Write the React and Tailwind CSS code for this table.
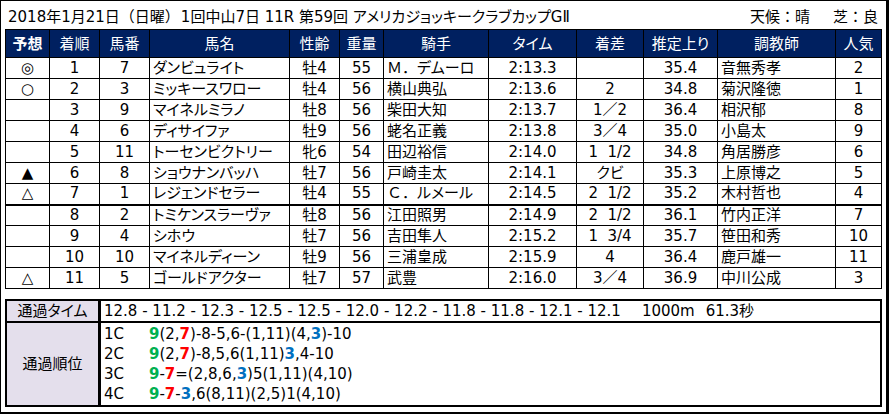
const rows = [
  ['◎', 1, 7, 'ダンビュライト', '牡4', 55, 'Ｍ．デムーロ', '2:13.3', '', '35.4', '音無秀孝', 2],
  ['○', 2, 3, 'ミッキースワロー', '牡4', 56, '横山典弘', '2:13.6', '2', '34.8', '菊沢隆徳', 1],
  ['', 3, 9, 'マイネルミラノ', '牡8', 56, '柴田大知', '2:13.7', '1／2', '36.4', '相沢郁', 8],
  ['', 4, 6, 'ディサイファ', '牡9', 56, '蛯名正義', '2:13.8', '3／4', '35.0', '小島太', 9],
  ['', 5, 11, 'トーセンビクトリー', '牝6', 54, '田辺裕信', '2:14.0', '1  1/2', '34.8', '角居勝彦', 6],
  ['▲', 6, 8, 'ショウナンバッハ', '牡7', 56, '戸崎圭太', '2:14.1', 'クビ', '35.3', '上原博之', 5],
  ['△', 7, 1, 'レジェンドセラー', '牡4', 55, 'Ｃ．ルメール', '2:14.5', '2  1/2', '35.2', '木村哲也', 4],
  ['', 8, 2, 'トミケンスラーヴァ', '牡8', 56, '江田照男', '2:14.9', '2  1/2', '36.1', '竹内正洋', 7],
  ['', 9, 4, 'シホウ', '牡7', 56, '吉田隼人', '2:15.2', '1  3/4', '35.7', '笹田和秀', 10],
  ['', 10, 10, 'マイネルディーン', '牡9', 56, '三浦皇成', '2:15.9', '4', '36.4', '鹿戸雄一', 11],
  ['△', 11, 5, 'ゴールドアクター', '牡7', 57, '武豊', '2:16.0', '3／4', '36.9', '中川公成', 3],
]

const headers = ['予想', '着順', '馬番', '馬名', '性齢', '重量', '騎手', 'タイム', '着差', '推定上り', '調教師', '人気']
const widths = [44, 50, 50, 140, 50, 44, 105, 88, 67, 74, 118, 46]
const leftCols = [3, 6, 10]

// g = green, r = red, b = blue, plain text otherwise
const passing = [
  ['1C', [['g', '9'], ['', '(2,'], ['r', '7'], ['', ')-8-5,6-(1,11)(4,'], ['b', '3'], ['', ')-10']]],
  ['2C', [['g', '9'], ['', '(2,'], ['r', '7'], ['', ')-8,5,6(1,11)'], ['b', '3'], ['', ',4-10']]],
  ['3C', [['g', '9'], ['', '-'], ['r', '7'], ['', '=(2,8,6,'], ['b', '3'], ['', ')5(1,11)(4,10)']]],
  ['4C', [['g', '9'], ['', '-'], ['r', '7'], ['', '-'], ['b', '3'], ['', ',6(8,11)(2,5)1(4,10)']]],
]

const colorClass = {
  g: 'font-bold text-[#00b050]',
  r: 'font-bold text-[#ff0000]',
  b: 'font-bold text-[#0070c0]',
  '': '',
}

// full-width punctuation keeps its full width, kana stay proportional
const FULL = '（）：．／ＭＣ'
function fw(text) {
  const s = String(text)
  const out = []
  let buf = ''
  for (const ch of s) {
    if (FULL.includes(ch)) {
      if (buf) out.push(buf)
      buf = ''
      out.push(
        <span key={out.length} className="[font-feature-settings:normal]">
          {ch}
        </span>
      )
    } else {
      buf += ch
    }
  }
  if (buf) out.push(buf)
  return out
}

export default function App() {
  return (
    <div className="w-[889px] h-[414px] bg-white border-l border-t border-r-[3px] border-b-[2px] border-black text-black text-[15px] font-['DejaVu_Sans','Noto_Sans_CJK_JP',sans-serif] [font-feature-settings:'palt']">
      {/* Title */}
      <div className="h-[28px] flex items-center justify-between pl-[7px] pr-[8px] pt-[3px] leading-[20px]">
        <div className="whitespace-pre">
          {fw('2018年1月21日（日曜）')}
          <span className="ml-[1px]">1回中山7日 11R 第59回 アメリカジョッキークラブカップGⅡ</span>
        </div>
        <div className="whitespace-pre">
          {fw('天候：晴')}
          <span className="ml-[23px]">{fw('芝：良')}</span>
        </div>
      </div>

      {/* Result table */}
      <table className="ml-[4px] w-[876px] table-fixed border-collapse">
        <colgroup>
          {widths.map((w, i) => (
            <col key={i} style={{ width: w }} />
          ))}
        </colgroup>
        <thead>
          <tr className="h-[28px] bg-[#002060] text-white">
            {headers.map((h, i) => (
              <th
                key={h}
                className={`border border-black p-0 leading-[20px] text-center ${i === 0 ? 'font-bold' : 'font-normal'}`}
              >
                {h}
              </th>
            ))}
          </tr>
        </thead>
        <tbody>
          {rows.map((r, ri) => (
            <tr key={ri} className={`h-[21px] ${ri === 6 ? 'border-b-2 border-black' : ''}`}>
              {r.map((c, ci) => (
                <td
                  key={ci}
                  className={`border border-black p-0 leading-[19px] whitespace-pre ${leftCols.includes(ci) ? 'text-left pl-[3px]' : 'text-center'} ${ri === 6 ? 'border-b-2' : ''}`}
                >
                  {fw(c)}
                </td>
              ))}
            </tr>
          ))}
        </tbody>
      </table>

      {/* Passing info */}
      <div className="mt-[10px] ml-[4px] w-[877px] border-2 border-black grid grid-cols-[94px_1fr]">
        <div className="h-[22px] border-r-[3px] border-b-2 border-black bg-[#e4dfec] flex items-center justify-center leading-[20px]">
          通過タイム
        </div>
        <div className="h-[22px] border-b-2 border-black flex items-center pl-[3px] leading-[20px] whitespace-pre">
          <span>12.8 - 11.2 - 12.3 - 12.5 - 12.5 - 12.0 - 12.2 - 11.8 - 11.8 - 12.1 - 12.1</span>
          <span className="ml-[21px]">1000m</span>
          <span className="ml-[11px]">61.3秒</span>
        </div>
        <div className="h-[82px] border-r-[3px] border-black bg-[#e4dfec] flex items-center justify-center leading-[20px]">
          通過順位
        </div>
        <div className="h-[82px] flex flex-col justify-center pl-[3px]">
          {passing.map(([c, segs]) => (
            <div key={c} className="flex h-[20px] leading-[20px]">
              <span className="w-[45px]">{c}</span>
              <span className="whitespace-pre">
                {segs.map(([k, t], i) => (
                  <span key={i} className={colorClass[k]}>
                    {t}
                  </span>
                ))}
              </span>
            </div>
          ))}
        </div>
      </div>
    </div>
  )
}
